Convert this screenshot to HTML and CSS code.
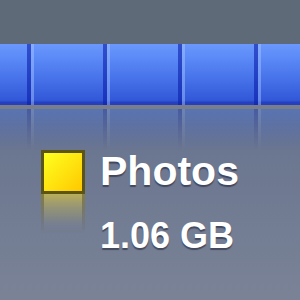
FILE: index.html
```html
<!DOCTYPE html>
<html>
<head>
<meta charset="utf-8">
<link rel="stylesheet" href="styles.css">
</head>
<body>
<div class="page">
  <div class="top"></div>
  <div class="bar">
    <div class="seg first"></div>
    <div class="seg"></div>
    <div class="seg"></div>
    <div class="seg"></div>
    <div class="seg last"></div>
  </div>
  <div class="rule"></div>
  <div class="bar reflection">
    <div class="seg first"></div>
    <div class="seg"></div>
    <div class="seg"></div>
    <div class="seg"></div>
    <div class="seg last"></div>
  </div>
  <div class="legend">
    <div class="swatch-col">
      <div class="swatch"></div>
      <div class="swatch swatch-reflect"></div>
    </div>
    <div class="labels">
      <div class="name">Photos</div>
      <div class="size">1.06 GB</div>
    </div>
  </div>
</div>
</body>
</html>
```
FILE: styles.css
```css
html, body {
  margin: 0;
  padding: 0;
}
body {
  width: 300px;
  height: 300px;
  overflow: hidden;
  background: #6f7a8f;
  font-family: "Liberation Sans", Arial, sans-serif;
}
.page {
  display: flex;
  flex-direction: column;
  height: 300px;
  background: linear-gradient(to bottom, #5f6a79 0, #5f6a79 44px, #6b7690 150px, #7a8396 300px);
}
.top {
  height: 44px;
  flex: none;
}
.bar {
  display: flex;
  height: 61px;
  flex: none;
  overflow: hidden;
  background: linear-gradient(to bottom, #6a98fd 0, #5a88f6 25%, #4570e8 60%, #3258d8 92%, #2440c0 96%, #2440c0 100%);
}
.seg {
  flex: none;
  width: 71.67px;
  border-left: 4px solid rgba(10, 30, 170, 0.6);
  box-shadow: inset 3px 0 0 rgba(170, 200, 255, 0.45);
}
.seg.first {
  width: 27px;
  border-left: 0;
  box-shadow: none;
}
.seg.last {
  width: 40px;
}
.rule {
  height: 4px;
  flex: none;
  background: #7a7e88;
}
.reflection {
  height: 41px;
  transform: scaleY(-1);
  opacity: 0.45;
  -webkit-mask-image: linear-gradient(to top, rgba(0,0,0,1) 0, rgba(0,0,0,0) 100%);
  mask-image: linear-gradient(to top, rgba(0,0,0,1) 0, rgba(0,0,0,0) 100%);
  background: linear-gradient(to top, #4a78e8 0, #3a62dc 100%);
}
.legend {
  display: flex;
  align-items: flex-start;
  padding-left: 41px;
}
.swatch-col {
  display: flex;
  flex-direction: column;
  width: 44px;
}
.swatch {
  width: 38px;
  height: 38px;
  border: 3px solid #5c5414;
  background: linear-gradient(135deg, #ffff22 0%, #ffe410 50%, #ffc800 100%);
}
.swatch-reflect {
  height: 36px;
  border-top: 0;
  border-color: rgba(80, 70, 20, 0.5);
  background: linear-gradient(to bottom, #c8b850 0%, #a8a068 60%, #7a8296 100%);
  -webkit-mask-image: linear-gradient(to bottom, rgba(0,0,0,0.85) 0, rgba(0,0,0,0) 100%);
  mask-image: linear-gradient(to bottom, rgba(0,0,0,0.85) 0, rgba(0,0,0,0) 100%);
}
.labels {
  display: flex;
  flex-direction: column;
  margin-left: 15px;
  padding-top: 1px;
  color: #ffffff;
  font-weight: bold;
  text-shadow: 0 2px 1px rgba(30, 30, 50, 0.55);
}
.name {
  font-size: 41px;
  line-height: 41px;
}
.size {
  font-size: 36px;
  line-height: 36px;
  margin-top: 26px;
}
```
